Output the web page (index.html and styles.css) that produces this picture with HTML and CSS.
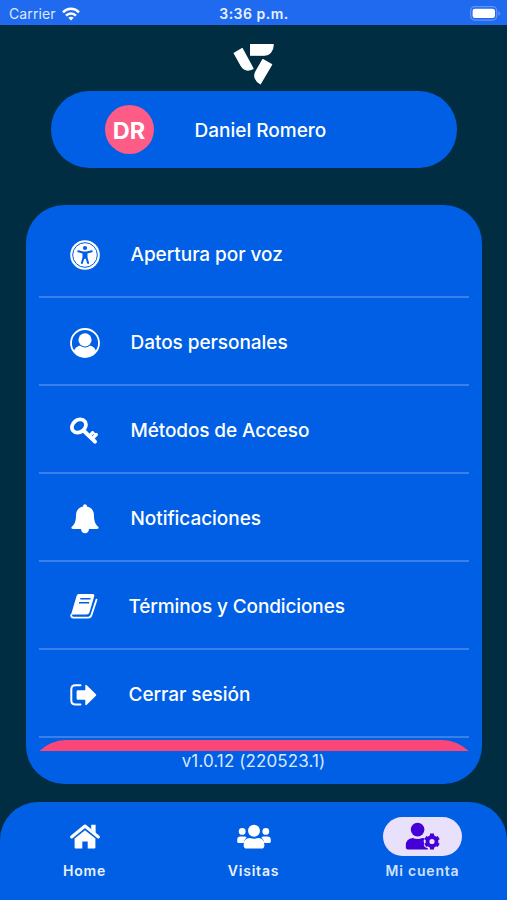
FILE: index.html
```html
<!DOCTYPE html>
<html lang="es">
<head>
    <meta charset="UTF-8">
    <meta name="viewport" content="width=device-width, initial-scale=1.0">
    <title>Mi cuenta</title>
    <link rel="stylesheet" href="styles.css">
</head>
<body>
    <div class="status-bar">
        <div class="carrier">
            <span class="carrier-name">Carrier</span>
            <svg class="wifi" width="18" height="14" viewBox="0 0 18 14" fill="none" stroke="#fff" stroke-width="2.5">
                <path d="M1 5.3C5.4.7 12.6.7 17 5.3"/>
                <path d="M4 8.7c2.8-2.9 7.2-2.9 10 0"/>
                <path d="M6.3 10.8c1.5-1.5 3.9-1.5 5.4 0L9 13.6z" fill="#fff" stroke="none"/>
            </svg>
        </div>
        <span class="clock">3:36 p.m.</span>
        <svg class="battery" width="31" height="15" viewBox="0 0 31 15">
            <rect x=".7" y=".7" width="26" height="13.4" rx="4" fill="none" stroke="#6495f5" stroke-width="1.2"/>
            <rect x="2.6" y="2.7" width="22.4" height="9.4" rx="2.4" fill="#fff"/>
            <path d="M28.3 5v4.8c2.4-1 2.4-3.8 0-4.8z" fill="#6495f5"/>
        </svg>
    </div>

    <header>
        <svg class="logo" width="42" height="42" viewBox="0 0 42 42" fill="#fff" stroke="#fff" stroke-width="1.2" stroke-linejoin="round">
            <path d="M17.6 1.6H40.2C40.2 7.8 36.6 12.2 31 12.2H17.6z"/>
            <path d="M1.2 10.2L9.2 5.5L20 25.6C14.8 28.2 10.8 27 8.2 22.8z"/>
            <path d="M29.8 16.6L38.6 21.6L27.4 40.8C22.2 38 20.6 33.2 22.8 28.8z"/>
        </svg>
    </header>

    <div class="profile">
        <div class="avatar">DR</div>
        <span class="name">Daniel Romero</span>
    </div>

    <main class="menu">
        <div class="menu-list">
            <div class="item">
                <svg width="30" height="30" viewBox="0 0 30 30">
                    <circle cx="15" cy="15" r="14.8" fill="#fff"/>
                    <circle cx="15" cy="15" r="12.3" fill="none" stroke="#005fe4" stroke-width="1"/>
                    <circle cx="15" cy="8" r="2.1" fill="#005fe4"/>
                    <path d="M8.3 11.3l4.7 1.2h4l4.7-1.2M13.5 13.5h3v4l1.6 5.5M13.5 13.5v4l-1.6 5.5M15 13v5" fill="none" stroke="#005fe4" stroke-width="2" stroke-linecap="round" stroke-linejoin="round"/>
                </svg>
                <span class="label">Apertura por voz</span>
            </div>
            <div class="item">
                <svg width="30" height="30" viewBox="0 0 30 30">
                    <circle cx="15" cy="15" r="14" fill="none" stroke="#fff" stroke-width="1.8"/>
                    <circle cx="15" cy="11.8" r="6.6" fill="#fff"/>
                    <path d="M4 22.8C5.5 19 8 17.8 10.4 17.7c2.6 2.3 6.6 2.3 9.2 0 2.4.1 4.9 1.3 6.4 5.1C23.5 27 19.4 29 15 29S6.5 27 4 22.8z" fill="#fff"/>
                </svg>
                <span class="label">Datos personales</span>
            </div>
            <div class="item">
                <svg width="30" height="30" viewBox="0 0 30 30" fill="none" stroke="#fff">
                    <ellipse cx="8.9" cy="10" rx="7.5" ry="6.1" transform="rotate(-38 8.9 10)" stroke-width="3.7"/>
                    <path d="M13.5 14.5L25 25.6" stroke-width="4" stroke-linecap="round"/>
                    <path d="M20 19.3l2.6-2.6 M22.8 22.2l3.5-3.7" stroke-width="3.3" stroke-linecap="round"/>
                    <path d="M22.3 15.9l3.9 3.3" stroke-width="1.8"/>
                </svg>
                <span class="label metodos">Métodos de Acceso</span>
            </div>
            <div class="item">
                <svg width="30" height="30" viewBox="0 0 30 30" fill="#fff">
                    <path d="M15 .2c-1.3 0-1.9.9-1.9 2.3C8.7 3.5 6 6.5 6 11.2c0 6.4-1.6 9.1-4 11.4-1.2 1.2-.5 2.4.9 2.4h24.2c1.4 0 2.1-1.2.9-2.4-2.4-2.3-4-5-4-11.4 0-4.7-2.7-7.7-7.1-8.7C16.9 1.1 16.3.2 15 .2z"/>
                    <path d="M11 25h8c0 5.6-8 5.6-8 0z"/>
                </svg>
                <span class="label">Notificaciones</span>
            </div>
            <div class="item">
                <svg width="28" height="30" viewBox="0 0 28 30">
                    <path d="M8.8 2H22.5Q24.8 2 24.2 4.3L19.5 20.2Q18.8 22.4 16.5 22.4H4.5Q1.7 22.4 .8 23.5L6.5 4.2Q7.1 2 8.8 2z" fill="#fff"/>
                    <path d="M26.5 7.6L21.4 23.1Q20.7 25.7 18 25.7H3.5Q.9 25.5 1.2 22.8" fill="none" stroke="#fff" stroke-width="1.8" stroke-linecap="round"/>
                    <path d="M10.3 6.8h10.2M9 10.8h10.2" stroke="#005fe4" stroke-width="1.4"/>
                </svg>
                <span class="label terminos">Términos y Condiciones</span>
            </div>
            <div class="item">
                <svg width="28" height="30" viewBox="0 0 28 30">
                    <path d="M10.5 5.2H5.5Q1.3 5.2 1.3 9.4v10.9Q1.3 24.5 5.5 24.5h5" fill="none" stroke="#fff" stroke-width="2" stroke-linecap="round"/>
                    <path d="M7.8 10.3h7.5V5.6q.3-1.3 1.5-.4l9.1 9q.8.8 0 1.6l-9.1 9q-1.2.9-1.5-.4v-4.7H7.8q-1.2 0-1.2-1.2v-7q0-1.2 1.2-1.2z" fill="#fff"/>
                </svg>
                <span class="label">Cerrar sesión</span>
            </div>
            <div class="next-card"></div>
        </div>
        <p class="version">v1.0.12 (220523.1)</p>
    </main>

    <nav>
        <div class="tab">
            <div class="tab-icon">
                <svg width="34" height="30" viewBox="0 0 34 30">
                    <path d="M23.2 2.8h4.4v8.5l-4.4-4z" fill="#fff"/>
                    <path d="M3.6 15L17 4L30.4 15" fill="none" stroke="#fff" stroke-width="3" stroke-linecap="round" stroke-linejoin="round"/>
                    <path d="M17 8.2L27.4 16.6V25.6q0 1-1 1H19.7v-7h-5.4v7H7.6q-1 0-1-1V16.6z" fill="#fff"/>
                </svg>
            </div>
            <span class="tab-label">Home</span>
        </div>
        <div class="tab">
            <div class="tab-icon">
                <svg width="34" height="30" viewBox="0 0 34 30" fill="#fff">
                    <circle cx="17" cy="8.8" r="6"/>
                    <circle cx="5.2" cy="9.4" r="3.4"/>
                    <circle cx="28.8" cy="9.4" r="3.4"/>
                    <path d="M3.5 14.5h3.8q1.7 0 2.3.9Q7.2 17.3 6.6 21H1.8q-1.6 0-1.6-1.6v-1.5q0-3.4 3.3-3.4z"/>
                    <path d="M30.5 14.5h-3.8q-1.7 0-2.3.9 2.4 1.9 3 5.6h4.8q1.6 0 1.6-1.6v-1.5q0-3.4-3.3-3.4z"/>
                    <path d="M12.8 16q4.2 1.6 8.4 0 6.1.2 6.1 6.2v1.6q0 2.8-2.8 2.8h-15Q6.7 26.6 6.7 23.800v-1.6q0-6 6.1-6.2z"/>
                </svg>
            </div>
            <span class="tab-label">Visitas</span>
        </div>
        <div class="tab">
            <div class="tab-icon active">
                <svg width="36" height="30" viewBox="0 0 36 30" fill="#4500d6">
                    <circle cx="12.6" cy="7.6" r="6.8"/>
                    <path d="M7.8 15.9q4.8 2 9.6 0l2.6.7q-2.2 1.9-.8 4.6-1.6 3.6 3.6 5.1v1.2H3Q.8 27.5.8 25.3V23.5q0-6.9 7-7.6z"/>
                    <circle cx="27" cy="19.500" r="4.5" fill="none" stroke="#4500d6" stroke-width="3.8"/>
                    <path d="M27 14v-2.4M27 25v2.4M31.5 16.9l2.2-1.3M31.5 22.1l2.2 1.3M22.5 16.9l-2.2-1.3M22.5 22.1l-2.2 1.3" stroke="#4500d6" stroke-width="4"/>
                </svg>
            </div>
            <span class="tab-label cuenta">Mi cuenta</span>
        </div>
    </nav>
</body>
</html>
```
FILE: styles.css
```css
* {
    box-sizing: border-box;
}

body {
    margin: 0;
    height: 900px;
    display: flex;
    flex-direction: column;
    align-items: center;
    overflow: hidden;
    background-color: #012d42;
    color: #fff;
    font-family: Inter, "Liberation Sans", sans-serif;
}

svg {
    display: block;
    flex: none;
}

.status-bar {
    width: 100%;
    height: 25px;
    flex: none;
    display: grid;
    grid-template-columns: 1fr auto 1fr;
    align-items: center;
    padding: 2px 6px 0 9px;
    background-color: #206aef;
    font-size: 14px;
    line-height: 20px;
}

.carrier {
    display: flex;
    align-items: center;
    gap: 6px;
}

.carrier-name {
    width: 47px;
    color: #dce8fd;
    letter-spacing: 0.1px;
}

.clock {
    margin-right: 2px;
    font-weight: 600;
    color: #e9f1ff;
    letter-spacing: 0.5px;
}

.battery {
    justify-self: end;
}

header {
    height: 66px;
    flex: none;
    padding-top: 18px;
}

.profile {
    width: 406px;
    height: 77px;
    flex: none;
    display: flex;
    align-items: center;
    gap: 41px;
    padding-left: 54px;
    border-radius: 38px;
    background-color: #005fe4;
}

.avatar {
    width: 49px;
    height: 49px;
    border-radius: 50%;
    background-color: #fd5c86;
    font-size: 23.5px;
    font-weight: 700;
    line-height: 51px;
    text-align: center;
}

.name {
    padding-top: 1px;
    font-size: 19px;
    font-weight: 500;
}

.menu {
    width: 456px;
    height: 579px;
    flex: none;
    margin-top: 37px;
    padding: 5px 13px 0;
    border-radius: 38px;
    background-color: #005fe4;
}

.menu-list {
    height: 541px;
    overflow: hidden;
}

.item {
    height: 88px;
    display: flex;
    align-items: center;
    gap: 30px;
    padding: 3px 0 0 31px;
    border-bottom: 2px solid #3981ea;
}

.label {
    padding-left: 1px;
    font-size: 19px;
    font-weight: 500;
    letter-spacing: -0.05px;
    white-space: nowrap;
}

.metodos,
.terminos {
    letter-spacing: -0.12px;
}

.next-card {
    height: 80px;
    margin: 2px -11px 0;
    border-radius: 38px;
    background-color: #fa4779;
}

.version {
    margin: 0;
    font-size: 17px;
    line-height: 21px;
    letter-spacing: 0.1px;
    color: #d9e8fc;
    text-align: center;
}

nav {
    width: 100%;
    height: 98px;
    flex: none;
    display: flex;
    margin-top: 18px;
    padding-top: 15px;
    border-radius: 38px 38px 0 0;
    background-color: #005fe4;
}

.tab {
    flex: 1;
    display: flex;
    flex-direction: column;
    align-items: center;
    gap: 6px;
}

.tab-icon {
    width: 79px;
    height: 39px;
    display: flex;
    align-items: center;
    justify-content: center;
    border-radius: 20px;
}

.active {
    background-color: #e9e0fc;
}

.tab-label {
    font-size: 14px;
    font-weight: 600;
    line-height: 18px;
    letter-spacing: 0.8px;
    color: #e8f1ff;
}

.cuenta {
    color: #cfe1fc;
}
```
